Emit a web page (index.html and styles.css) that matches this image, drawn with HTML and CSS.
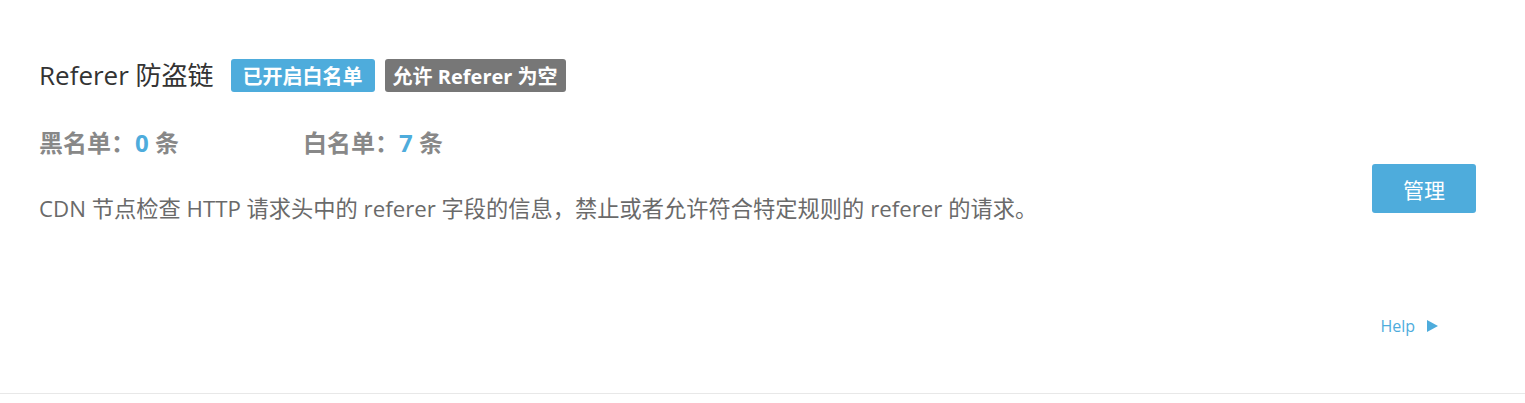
FILE: index.html
```html
<!DOCTYPE html>
<html lang="zh-CN">
<head>
<meta charset="utf-8">
<title>Referer 防盗链</title>
<link rel="stylesheet" href="styles.css">
</head>
<body>
<div class="card">
  <div class="main">
    <div class="title-row">
      <h2 class="title">Referer 防盗链</h2>
      <span class="badge badge-blue">已开启白名单</span>
      <span class="badge badge-gray">允许 Referer 为空</span>
    </div>
    <div class="stats">
      <div class="stat">黑名单：<span class="num">0</span> 条</div>
      <div class="stat">白名单：<span class="num">7</span> 条</div>
    </div>
    <p class="desc">CDN 节点检查 HTTP 请求头中的 referer 字段的信息，禁止或者允许符合特定规则的 referer 的请求。</p>
  </div>
  <div class="side">
    <button class="btn">管理</button>
    <a class="help" href="#">Help<span class="arrow"></span></a>
  </div>
</div>
</body>
</html>
```
FILE: styles.css
```css
html, body {
  margin: 0;
  padding: 0;
  background: #fff;
}
body {
  font-family: "Open Sans", "Noto Sans CJK SC", sans-serif;
}
.card {
  box-sizing: border-box;
  height: 394px;
  border-bottom: 1px solid #e8e8e8;
  display: flex;
  justify-content: space-between;
  padding: 58px 49px 0 39px;
}
.title-row {
  display: flex;
  align-items: center;
  height: 34px;
}
.title {
  margin: 0 17px 0 0;
  font-size: 26px;
  line-height: 34px;
  font-weight: 400;
  color: #333;
}
.badge {
  display: inline-flex;
  align-items: center;
  height: 33px;
  border-radius: 3px;
  color: #fff;
  font-size: 20px;
  font-weight: 700;
  margin-right: 10px;
}
.badge-blue {
  background: #4eacdc;
  padding: 0 12px;
}
.badge-gray {
  background: #777;
  padding: 0 8px;
}
.stats {
  display: flex;
  margin-top: 34px;
  height: 34px;
  align-items: center;
}
.stat {
  font-size: 24px;
  line-height: 34px;
  font-weight: 700;
  color: #888;
  width: 264px;
}
.num { color: #4eacdc; }
.desc {
  margin: 34px 0 0;
  font-size: 22.25px;
  line-height: 30px;
  color: #6a6a6a;
}
.side {
  display: flex;
  flex-direction: column;
  align-items: flex-end;
  padding-top: 106px;
}
.btn {
  width: 104px;
  height: 49px;
  border: none;
  border-radius: 3px;
  background: #4eacdc;
  color: #fff;
  font-family: "Noto Sans CJK SC", sans-serif;
  font-size: 21px;
  cursor: pointer;
}
.help {
  margin-top: 102px;
  margin-right: 38px;
  color: #4eacdc;
  font-size: 16px;
  line-height: 22px;
  text-decoration: none;
  display: flex;
  align-items: center;
}
.arrow {
  margin-left: 12px;
  width: 0;
  height: 0;
  border-top: 6.5px solid transparent;
  border-bottom: 6.5px solid transparent;
  border-left: 11px solid #4eacdc;
}
```
